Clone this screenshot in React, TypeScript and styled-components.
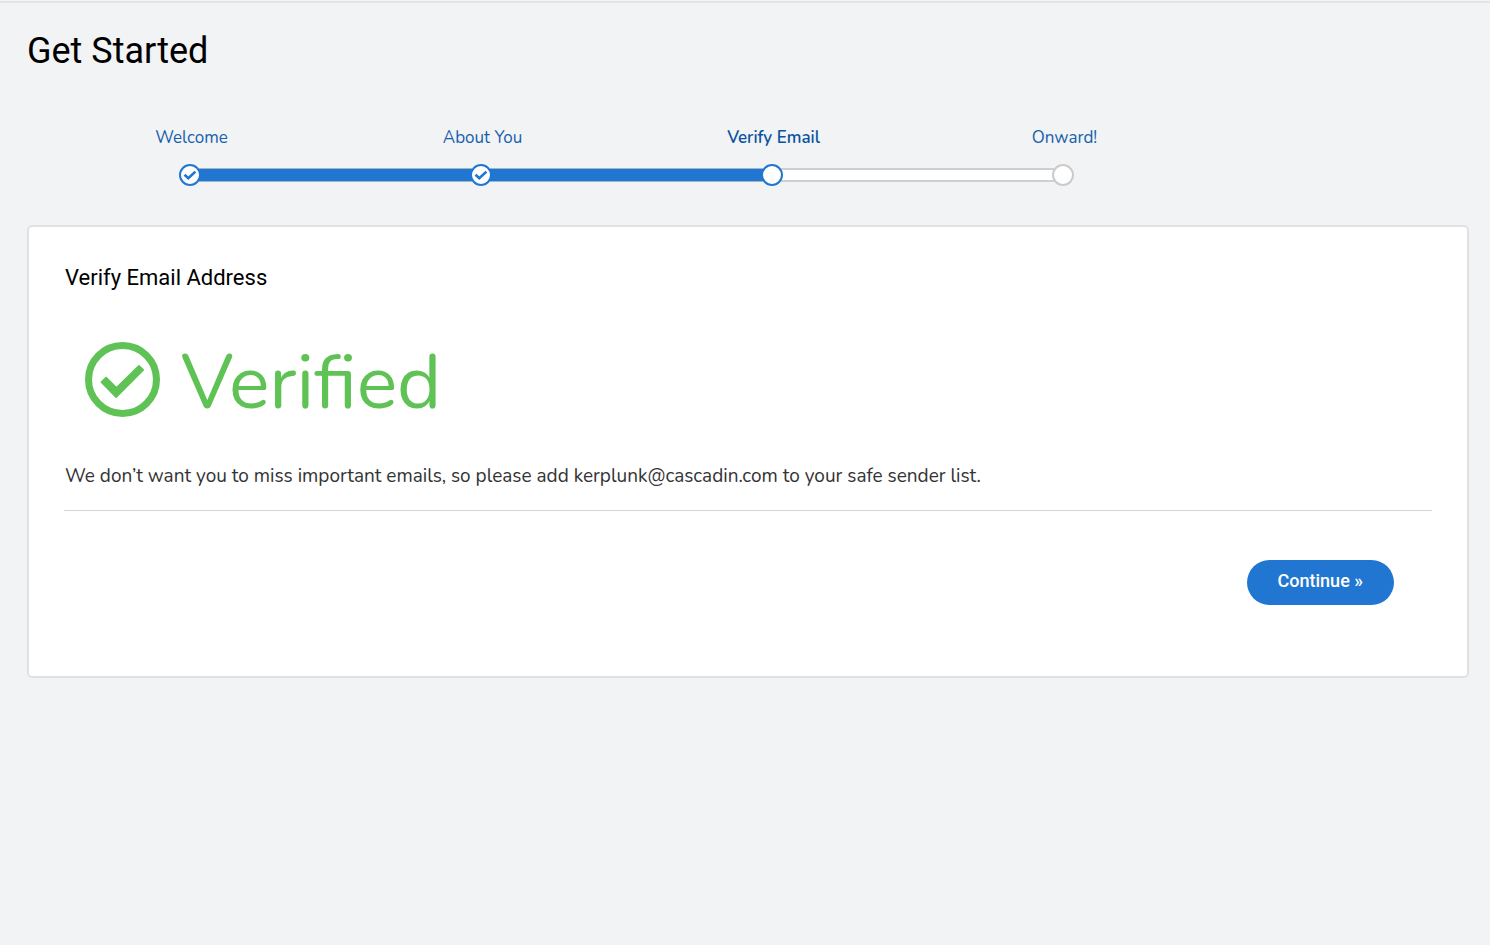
import React from "react";
import styled, { createGlobalStyle } from "styled-components";

const blue = "#2176d2";
const bodyFont = `Nunito, Lato, "Open Sans", sans-serif`;
const headFont = `Roboto, "Liberation Sans", sans-serif`;

const GlobalStyle = createGlobalStyle`
  *, *::before, *::after { box-sizing: border-box; }
  body {
    margin: 0;
    background: #f1f3f5;
    color: #333;
    font-family: ${bodyFont};
    font-size: 19px;
  }
`;

const Page = styled.main`
  padding: 24px 21px 24px 27px;
  border-top: 2px solid #e1e3e6;
  margin-top: 1px;
`;

const PageTitle = styled.h1`
  margin: 0;
  color: #000;
  font: 400 36px/48px ${headFont};
`;

const Steps = styled.ol`
  display: grid;
  grid-template-columns: repeat(4, 1fr);
  max-width: 1164px;
  margin: 49px 0 0 17px;
  padding: 0;
  list-style: none;
`;

const Step = styled.li`
  display: flex;
  flex-direction: column;
  align-items: center;
`;

const StepLink = styled.a<{ $current?: boolean }>`
  padding-left: 4px;
  color: ${(p) => (p.$current ? "#0b529f" : "#1760ab")};
  font-size: 17px;
  line-height: 28px;
  font-weight: ${(p) => (p.$current ? 600 : 400)};
  text-decoration: none;
`;

const Track = styled.div`
  display: grid;
  grid-template-columns: 1fr 22px 1fr;
  align-items: center;
  width: 100%;
  height: 22px;
  margin-top: 12px;
`;

const Rail = styled.span<{ $kind: "none" | "done" | "open" }>`
  height: 14px;
  margin: 0 -2px;
  border: solid ${(p) => (p.$kind === "done" ? "#a5b4c3" : "#cfcfcf")};
  border-width: ${(p) => (p.$kind === "done" ? "1px 0" : "2px 0")};
  background: ${(p) => (p.$kind === "done" ? blue : "#fff")};
  visibility: ${(p) => (p.$kind === "none" ? "hidden" : "visible")};
`;

const Dot = styled.span<{ $reached: boolean }>`
  display: flex;
  align-items: center;
  justify-content: center;
  height: 22px;
  border: ${(p) => (p.$reached ? `2px solid ${blue}` : "2px solid #cbcbcb")};
  border-radius: 50%;
  background: #fff;
  z-index: 1;
`;

const Card = styled.section`
  margin-top: 39px;
  padding: 35px 35px 71px;
  border: 2px solid #e0e1e3;
  border-radius: 5px;
  background: #fff;
`;

const CardTitle = styled.h2`
  margin: 0;
  padding-left: 1px;
  color: #000;
  font: 400 22px/32px ${headFont};
`;

const Status = styled.p`
  display: flex;
  align-items: center;
  gap: 21px;
  margin: 33px 0 0 21px;
  color: #5fc255;
  font-size: 76px;
  line-height: 112px;
`;

const Note = styled.p`
  margin: 23px 0 0;
  padding: 0 0 20px 1px;
  border-bottom: 1px solid #d6d6d6;
  line-height: 28px;
`;

const Actions = styled.div`
  display: flex;
  justify-content: flex-end;
  padding: 49px 38px 0;
`;

const Button = styled.button`
  height: 45px;
  padding: 0 31px 3px;
  border: 0;
  border-radius: 23px;
  background: ${blue};
  color: #fff;
  font: 500 18px/24px ${headFont};
  cursor: pointer;
`;

const steps = ["Welcome", "About You", "Verify Email", "Onward!"];
const current = 2;

const StepCheck = () => (
  <svg width="14" height="12" viewBox="0 0 14 12" fill="none" aria-hidden="true">
    <path d="M1.5 5.8 5.3 9.3 12.4 2.6" stroke={blue} strokeWidth="2.6" />
  </svg>
);

const StatusMark = styled.svg`
  width: 75px;
  height: 75px;
  margin-bottom: 8px;
`;

const VerifiedIcon = () => (
  <StatusMark viewBox="0 0 224 224" aria-hidden="true">
    <circle cx="112" cy="112" r="101.5" fill="none" stroke="currentColor" strokeWidth="21" />
    <path
      d="M49 120 63 106 94 137 161 71 174 83 93 165Z"
      fill="currentColor"
      stroke="currentColor"
      strokeWidth="5"
      strokeLinejoin="round"
    />
  </StatusMark>
);

export default function App() {
  const rail = (joined: boolean, done: boolean) => (!joined ? "none" : done ? "done" : "open");
  return (
    <>
      <GlobalStyle />
      <Page>
        <PageTitle>Get Started</PageTitle>
        <Steps>
          {steps.map((label, i) => (
            <Step key={label} aria-current={i === current ? "step" : undefined}>
              <StepLink href="#" $current={i === current}>
                {label}
              </StepLink>
              <Track>
                <Rail $kind={rail(i > 0, i <= current)} />
                <Dot $reached={i <= current}>{i < current && <StepCheck />}</Dot>
                <Rail $kind={rail(i < steps.length - 1, i < current)} />
              </Track>
            </Step>
          ))}
        </Steps>
        <Card>
          <CardTitle>Verify Email Address</CardTitle>
          <Status>
            <VerifiedIcon />
            Verified
          </Status>
          <Note>
            We don’t want you to miss important emails, so please add kerplunk@cascadin.com to your
            safe sender list.
          </Note>
          <Actions>
            <Button type="button">Continue »</Button>
          </Actions>
        </Card>
      </Page>
    </>
  );
}
